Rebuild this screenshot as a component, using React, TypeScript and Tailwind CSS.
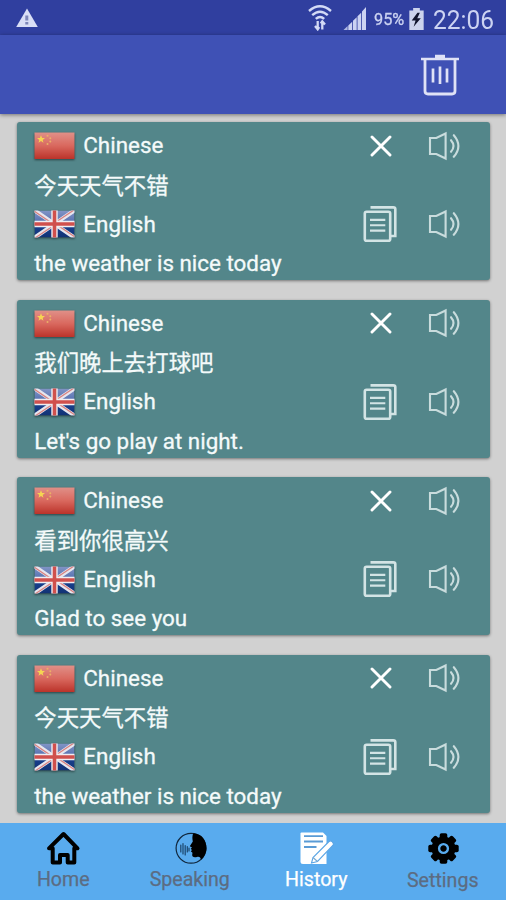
import React from 'react'

interface HistoryEntry {
  source: string
  translation: string
}

interface NavItem {
  label: string
  icon: React.ReactNode
  active?: boolean
  labelClass?: string
}

const entries: HistoryEntry[] = [
  { source: '今天天气不错', translation: 'the weather is nice today' },
  { source: '我们晚上去打球吧', translation: "Let's go play at night." },
  { source: '看到你很高兴', translation: 'Glad to see you' },
  { source: '今天天气不错', translation: 'the weather is nice today' },
]

const ChinaFlag = () => (
  <svg className="h-[28px] w-[41px] shrink-0 drop-shadow-[0_1px_1px_rgba(0,0,0,0.5)]" viewBox="0 0 41 28">
    <defs>
      <linearGradient id="cn" x1="0" y1="0" x2="0" y2="1">
        <stop offset="0" stopColor="#e09088" />
        <stop offset="0.5" stopColor="#d9685e" />
        <stop offset="1" stopColor="#bb332a" />
      </linearGradient>
    </defs>
    <rect x="0.5" y="0.5" width="40" height="26.5" fill="url(#cn)" />
    <path d="M7 3.3l1.1 2.7 2.9.1-2.3 1.8.8 2.8L7 9.1l-2.5 1.6.8-2.8L3 6.1l2.9-.1z" fill="#f6d552" />
    <g fill="#ebb066">
      <circle cx="13.5" cy="3.8" r="1" />
      <circle cx="16.3" cy="6.2" r="1" />
      <circle cx="16.3" cy="9.6" r="1" />
      <circle cx="13.5" cy="12" r="1" />
    </g>
  </svg>
)

const BritainFlag = () => (
  <svg className="h-[28px] w-[41px] shrink-0 drop-shadow-[0_1px_1px_rgba(0,0,0,0.5)]" viewBox="0 0 41 28">
    <defs>
      <linearGradient id="gb" x1="0" y1="0" x2="0" y2="1">
        <stop offset="0" stopColor="#8295c6" />
        <stop offset="0.45" stopColor="#5470b0" />
        <stop offset="0.6" stopColor="#173f8d" />
        <stop offset="1" stopColor="#123274" />
      </linearGradient>
      <clipPath id="gbClip">
        <rect x="0.5" y="0.5" width="40" height="27" />
      </clipPath>
    </defs>
    <g clipPath="url(#gbClip)">
      <rect x="0.5" y="0.5" width="40" height="27" fill="url(#gb)" />
      <path d="M0 0L41 28M41 0L0 28" stroke="#e6e6ee" strokeWidth="4" />
      <path d="M0 1L20 14.6M41 27L21 13.4M40 0L20.5 13M1 28L20.5 15" stroke="#d98380" strokeWidth="1.3" />
      <path d="M20.5 0V28M0 14H41" stroke="#f0edf1" strokeWidth="6.4" />
      <path d="M20.5 0V28M0 14H41" stroke="#d0504d" strokeWidth="3.6" />
    </g>
  </svg>
)

const SpeakerIcon = () => (
  <svg
    className="h-[30px] w-[34px]"
    viewBox="0 0 34 30"
    fill="none"
    stroke="#c9dcdd"
    strokeWidth="2.1"
    strokeLinecap="round"
  >
    <path d="M2 7H8.3L17.6 2.5V27.5L8.3 23H2Z" />
    <path d="M23 9.2Q28 15 23 20.8" />
    <path d="M25.8 4.2Q35 15 25.8 25.8" />
  </svg>
)

const CloseIcon = () => (
  <svg
    className="h-[22px] w-[22px]"
    viewBox="0 0 22 22"
    stroke="#fff"
    strokeWidth="2.9"
    strokeLinecap="round"
  >
    <path d="M2 2L20 20M20 2L2 20" />
  </svg>
)

const CopyIcon = () => (
  <svg className="h-[38px] w-[34px]" viewBox="0 0 34 38" fill="none" stroke="#d3e4e5" strokeWidth="2.6">
    <rect x="1.8" y="6.7" width="25.4" height="29" rx="1.8" />
    <path d="M7.5 2.4H30.3Q32.3 2.4 32.3 4.1V31H28" />
    <path d="M7 14.9H22.3M7 20.2H22.3M7 25.6H22.3" strokeWidth="2.1" />
  </svg>
)

const TrashIcon = () => (
  <svg className="h-[42px] w-[40px]" viewBox="0 0 40 42" fill="none" stroke="#dfe2f6">
    <path d="M1 5H39" strokeWidth="2.6" />
    <path d="M15 2.5H25" strokeWidth="3.5" />
    <path d="M5 5V37Q5 40 8 40H32Q35 40 35 37V5" strokeWidth="2.8" />
    <path d="M13 14.5V28.5M20 12.5V30M27 14.5V28.5" strokeWidth="2.7" />
  </svg>
)

const StatusBar = () => (
  <div className="flex h-[35px] items-center bg-[#303f9f] pr-[12px] pl-[16px] text-[#ccd3f2]">
    <svg className="mt-px h-[20px] w-[22px]" viewBox="0 0 22 20">
      <path d="M11 0.5L21.8 19H0.2Z" fill="#d9def6" />
      <path d="M10.8 7.5V12.5M10.8 14V16.5" stroke="#7d86b8" strokeWidth="3" />
    </svg>
    <svg
      className="mt-px ml-auto h-[26px] w-[24px]"
      viewBox="0 0 24 26"
      fill="none"
      stroke="#d3daf6"
      strokeWidth="2.4"
    >
      <path d="M1 6Q12 -3.5 23 6" />
      <path d="M4.2 10.2Q12 3.2 19.8 10.2" />
      <path d="M7.8 13.8Q12 10 16.2 13.8" />
      <path d="M9.7 16V24M7 21L9.7 24.3L11.2 22M14.3 24.5V16.5M17 19.5L14.3 16.3L12.8 18.5" strokeWidth="2.3" />
    </svg>
    <svg className="ml-[11px] h-[24px] w-[24px]" viewBox="0 0 24 24" fill="#ccd3f2">
      <path d="M0.5 24L4.6 20V24Z" fill="#aeb8e2" />
      <path d="M5.3 19.4L9.2 15.8V24H5.3ZM10 14.8L13.7 11.3V24H10ZM14.5 10.2L18.2 6.8V24H14.5ZM19 5.5L23 1V24H19Z" />
    </svg>
    <span className="mt-[5px] ml-[7px] w-[31px] text-[17px] whitespace-nowrap [-webkit-text-stroke:0.3px]">
      <span className="inline-block origin-left scale-x-[0.96]">95%</span>
    </span>
    <svg className="mt-[2px] ml-[4px] h-[22px] w-[15px]" viewBox="0 0 15 23">
      <path d="M4 0H11V2.5H15V23H0V2.5H4Z" fill="#ccd3ed" />
      <path d="M8.5 5L2.5 13H6.5L4.5 19.5L12 10.8H8.3L11 5Z" fill="#11152e" />
    </svg>
    <span className="mt-[5px] ml-[9px] w-[61px] text-[25px] leading-none whitespace-nowrap">
      <span className="inline-block origin-left scale-x-[0.98]">22:06</span>
    </span>
  </div>
)

const HistoryCard: React.FC<{ entry: HistoryEntry }> = ({ entry }) => {
  return (
    <div className="flex h-[158.3px] shrink-0 flex-col rounded-[3px] bg-[#53868a] pt-[4.5px] pl-[17px] text-[22.4px] text-[#f4fafa] shadow-[0_1px_3px_rgba(0,0,0,0.45)] [-webkit-text-stroke:0.3px]">
      {/* Source language */}
      <div className="flex h-[39.2px] shrink-0 items-center">
        <ChinaFlag />
        <span className="ml-[8px] w-[271.5px]">Chinese</span>
        <div className="flex w-[42px] shrink-0 justify-center pb-px pl-[11px]">
          <CloseIcon />
        </div>
        <div className="ml-[31px] pb-px">
          <SpeakerIcon />
        </div>
      </div>
      <p className="h-[39.2px] shrink-0 pt-px leading-[39.2px]">{entry.source}</p>

      {/* Target language */}
      <div className="flex h-[39.2px] shrink-0 items-center">
        <BritainFlag />
        <span className="ml-[8px] w-[271.5px]">English</span>
        <div className="flex w-[42px] shrink-0 justify-end pb-px">
          <CopyIcon />
        </div>
        <div className="ml-[31px] pb-px">
          <SpeakerIcon />
        </div>
      </div>
      <p className="h-[39.2px] shrink-0 leading-[39.2px]">{entry.translation}</p>
    </div>
  )
}

const HomeIcon = () => (
  <svg className="h-[36px] w-[36px]" viewBox="0 0 36 36" fill="none" stroke="#000" strokeWidth="4" strokeLinejoin="round">
    <path d="M18.5 4L32.5 18.3H29.3V32.5H22.7V25H15V32.5H7.7V18.3H4L18.5 4Z" />
  </svg>
)

const SpeakingIcon = () => (
  <svg className="h-[36px] w-[36px]" viewBox="0 0 36 36">
    <circle cx="19" cy="18.3" r="14.9" fill="none" stroke="#10263c" strokeWidth="1.2" />
    <path
      d="M21.5 3.2C30 3.5 34.5 10.5 34.5 18.3C34.5 23 32 27.5 29 29.8C28.5 27.5 27.5 26.5 25 27C21.5 27.6 20 27 20.2 24.5L20.5 22.8L18.8 21.3L20 20L18.7 18.8L20 17.5L17.8 16.2L20.8 11.5C20.3 8.5 20 5.5 21.5 3.2Z"
      fill="#000"
    />
    <path
      d="M8.8 15V22M11 13.5V24M13.2 15.5V25M15.3 16.5V22M17 18V21"
      stroke="#1c466c"
      strokeWidth="1.2"
      strokeLinecap="round"
    />
  </svg>
)

const NoteIcon = () => (
  <svg className="h-[36px] w-[36px]" viewBox="0 0 36 36">
    <path d="M3.5 2.5H25L28.5 6V34H5Q2.5 34 2.5 31.5V3.5Q2.5 2.5 3.5 2.5Z" fill="#fff" />
    <path d="M6 6.2H25M6 11.5H25M6 17H18.5" stroke="#5a9bd5" strokeWidth="1.8" />
    <path
      d="M13.5 33L15 27.5L31 11.5Q32.5 10.2 34 11.5L35 12.8Q36 14 34.8 15.5L19.5 31.5Z"
      fill="#fff"
      stroke="#5aa5e5"
      strokeWidth="1.1"
    />
    <path d="M15 27.5L19.5 31.5" stroke="#78a9d0" strokeWidth="1.2" />
  </svg>
)

const GearIcon = () => (
  <svg className="h-[36px] w-[36px]" viewBox="0 0 36 36">
    <g transform="translate(18.5 18.5)">
      <circle r="12" fill="#000" />
      {[0, 45, 90, 135, 180, 225, 270, 315].map((angle) => (
        <rect
          key={angle}
          x="-3.8"
          y="-15.2"
          width="7.6"
          height="7"
          rx="1.8"
          fill="#000"
          transform={`rotate(${angle})`}
        />
      ))}
      <circle r="4.4" fill="none" stroke="#59abee" strokeWidth="2.4" />
    </g>
  </svg>
)

const navItems: NavItem[] = [
  { label: 'Home', icon: <HomeIcon /> },
  { label: 'Speaking', icon: <SpeakingIcon /> },
  { label: 'History', icon: <NoteIcon />, active: true },
  { label: 'Settings', icon: <GearIcon />, labelClass: 'mt-px' },
]

export default function App() {
  return (
    <div className="flex h-[900px] w-[506px] flex-col overflow-hidden bg-[#d1d1d1] font-[Roboto,'Noto_Sans_CJK_SC',sans-serif]">
      <StatusBar />

      {/* Toolbar */}
      <header className="z-10 flex h-[79px] shrink-0 items-center justify-end bg-[#3f51b5] pr-[46px] shadow-[0_1px_4px_rgba(0,0,0,0.45)]">
        <TrashIcon />
      </header>

      <main className="flex h-[709px] shrink-0 flex-col gap-[19.3px] overflow-hidden pt-[8px] pr-[16px] pl-[17.3px]">
        {entries.map((entry, idx) => (
          <HistoryCard key={idx} entry={entry} />
        ))}
      </main>

      {/* Bottom navigation */}
      <nav className="grid h-[77px] shrink-0 grid-cols-4 bg-[#59abee]">
        {navItems.map((item) => (
          <div key={item.label} className="flex flex-col items-center pt-[7px]">
            {item.icon}
            <span
              className={`text-[19.6px] leading-[28px] [-webkit-text-stroke:0.25px] ${item.active ? 'text-white' : 'text-[#5c6c82]'} ${item.labelClass ?? ''}`}
            >
              {item.label}
            </span>
          </div>
        ))}
      </nav>
    </div>
  )
}
